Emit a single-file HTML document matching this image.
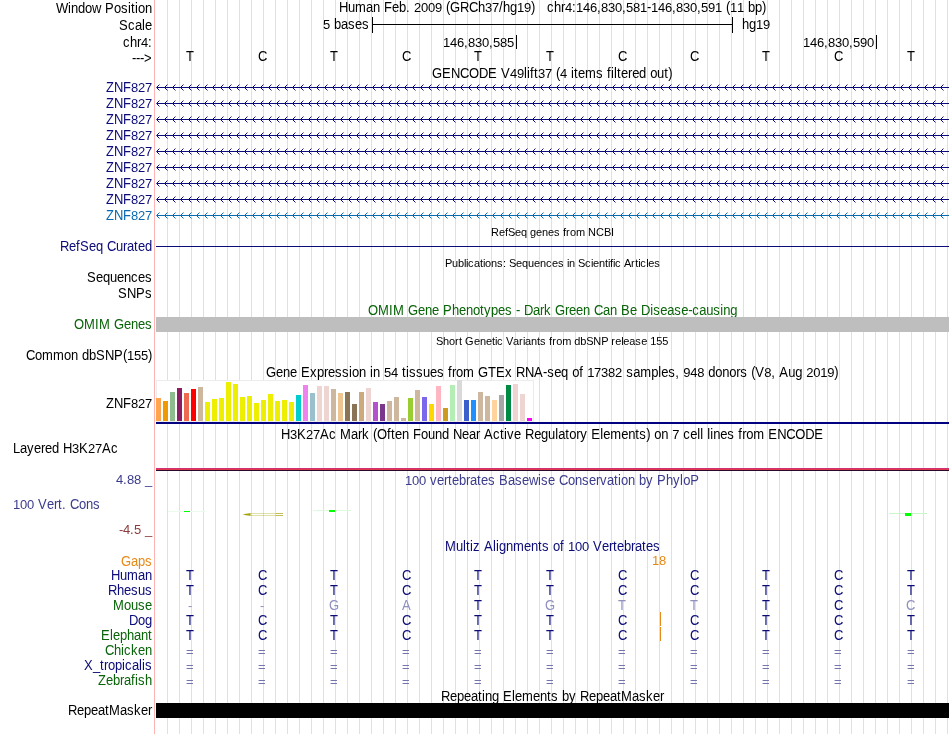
<!DOCTYPE html>
<html><head><meta charset="utf-8"><title>UCSC Genome Browser</title>
<style>
html,body{margin:0;padding:0;background:#fff;}
body{width:950px;height:734px;position:relative;overflow:hidden;font-family:"Liberation Sans",sans-serif;}
svg{position:absolute;left:0;top:0;}
#tx{position:absolute;left:0;top:0;width:950px;height:734px;will-change:transform;}
.d{display:inline-block;transform:scaleY(.945);transform-origin:0 12px;}
.t{position:absolute;white-space:pre;font-kerning:none;font-family:"Liberation Sans",sans-serif;}
</style></head><body>
<svg width="950" height="734" viewBox="0 0 950 734" shape-rendering="crispEdges">
<rect x="167" y="0" width="1" height="734" fill="#dcdcff"/>
<rect x="179" y="0" width="1" height="734" fill="#dcdcff"/>
<rect x="191" y="0" width="1" height="734" fill="#dcdcff"/>
<rect x="203" y="0" width="1" height="734" fill="#dcdcff"/>
<rect x="215" y="0" width="1" height="734" fill="#dcdcff"/>
<rect x="227" y="0" width="1" height="734" fill="#dcdcff"/>
<rect x="239" y="0" width="1" height="734" fill="#dcdcff"/>
<rect x="251" y="0" width="1" height="734" fill="#dcdcff"/>
<rect x="263" y="0" width="1" height="734" fill="#dcdcff"/>
<rect x="275" y="0" width="1" height="734" fill="#dcdcff"/>
<rect x="287" y="0" width="1" height="734" fill="#dcdcff"/>
<rect x="299" y="0" width="1" height="734" fill="#dcdcff"/>
<rect x="311" y="0" width="1" height="734" fill="#dcdcff"/>
<rect x="323" y="0" width="1" height="734" fill="#dcdcff"/>
<rect x="335" y="0" width="1" height="734" fill="#dcdcff"/>
<rect x="347" y="0" width="1" height="734" fill="#dcdcff"/>
<rect x="359" y="0" width="1" height="734" fill="#dcdcff"/>
<rect x="371" y="0" width="1" height="734" fill="#dcdcff"/>
<rect x="383" y="0" width="1" height="734" fill="#dcdcff"/>
<rect x="395" y="0" width="1" height="734" fill="#dcdcff"/>
<rect x="407" y="0" width="1" height="734" fill="#dcdcff"/>
<rect x="419" y="0" width="1" height="734" fill="#dcdcff"/>
<rect x="431" y="0" width="1" height="734" fill="#dcdcff"/>
<rect x="443" y="0" width="1" height="734" fill="#dcdcff"/>
<rect x="455" y="0" width="1" height="734" fill="#dcdcff"/>
<rect x="467" y="0" width="1" height="734" fill="#dcdcff"/>
<rect x="479" y="0" width="1" height="734" fill="#dcdcff"/>
<rect x="491" y="0" width="1" height="734" fill="#dcdcff"/>
<rect x="503" y="0" width="1" height="734" fill="#dcdcff"/>
<rect x="515" y="0" width="1" height="734" fill="#dcdcff"/>
<rect x="527" y="0" width="1" height="734" fill="#dcdcff"/>
<rect x="539" y="0" width="1" height="734" fill="#dcdcff"/>
<rect x="551" y="0" width="1" height="734" fill="#dcdcff"/>
<rect x="563" y="0" width="1" height="734" fill="#dcdcff"/>
<rect x="575" y="0" width="1" height="734" fill="#dcdcff"/>
<rect x="587" y="0" width="1" height="734" fill="#dcdcff"/>
<rect x="599" y="0" width="1" height="734" fill="#dcdcff"/>
<rect x="611" y="0" width="1" height="734" fill="#dcdcff"/>
<rect x="623" y="0" width="1" height="734" fill="#dcdcff"/>
<rect x="635" y="0" width="1" height="734" fill="#dcdcff"/>
<rect x="647" y="0" width="1" height="734" fill="#dcdcff"/>
<rect x="659" y="0" width="1" height="734" fill="#dcdcff"/>
<rect x="671" y="0" width="1" height="734" fill="#dcdcff"/>
<rect x="683" y="0" width="1" height="734" fill="#dcdcff"/>
<rect x="695" y="0" width="1" height="734" fill="#dcdcff"/>
<rect x="707" y="0" width="1" height="734" fill="#dcdcff"/>
<rect x="719" y="0" width="1" height="734" fill="#dcdcff"/>
<rect x="731" y="0" width="1" height="734" fill="#dcdcff"/>
<rect x="743" y="0" width="1" height="734" fill="#dcdcff"/>
<rect x="755" y="0" width="1" height="734" fill="#dcdcff"/>
<rect x="767" y="0" width="1" height="734" fill="#dcdcff"/>
<rect x="779" y="0" width="1" height="734" fill="#dcdcff"/>
<rect x="791" y="0" width="1" height="734" fill="#dcdcff"/>
<rect x="803" y="0" width="1" height="734" fill="#dcdcff"/>
<rect x="815" y="0" width="1" height="734" fill="#dcdcff"/>
<rect x="827" y="0" width="1" height="734" fill="#dcdcff"/>
<rect x="839" y="0" width="1" height="734" fill="#dcdcff"/>
<rect x="851" y="0" width="1" height="734" fill="#dcdcff"/>
<rect x="863" y="0" width="1" height="734" fill="#dcdcff"/>
<rect x="875" y="0" width="1" height="734" fill="#dcdcff"/>
<rect x="887" y="0" width="1" height="734" fill="#dcdcff"/>
<rect x="899" y="0" width="1" height="734" fill="#dcdcff"/>
<rect x="911" y="0" width="1" height="734" fill="#dcdcff"/>
<rect x="923" y="0" width="1" height="734" fill="#dcdcff"/>
<rect x="935" y="0" width="1" height="734" fill="#dcdcff"/>
<rect x="947" y="0" width="1" height="734" fill="#dcdcff"/>
<rect x="154" y="0" width="1" height="734" fill="#ffb4b4"/>
</svg>
<div id="tx">
<div class="t" style="left:56px;top:1px;font-size:13px;line-height:16px;color:#000;transform:scaleY(1.06);transform-origin:0 12px;"><span style="letter-spacing:-0.27px">W</span><span style="letter-spacing:0.112px">i</span><span style="letter-spacing:-0.23px">ndo</span><span style="letter-spacing:-0.388px">w</span><span style="letter-spacing:0.388px"> </span><span style="letter-spacing:0.329px">P</span><span style="letter-spacing:-0.23px">o</span><span style="letter-spacing:0.5px">s</span><span style="letter-spacing:0.112px">i</span><span style="letter-spacing:0.388px">t</span><span style="letter-spacing:0.112px">i</span><span style="letter-spacing:-0.23px">on</span></div>
<div class="t" style="left:119px;top:18px;font-size:13px;line-height:16px;color:#000;transform:scaleY(1.06);transform-origin:0 12px;"><span style="letter-spacing:0.329px">S</span><span style="letter-spacing:0.5px">c</span><span style="letter-spacing:-0.23px">a</span><span style="letter-spacing:0.112px">l</span><span style="letter-spacing:-0.23px">e</span></div>
<div class="t" style="left:123px;top:35px;font-size:13px;line-height:16px;color:#000;transform:scaleY(1.06);transform-origin:0 12px;"><span style="letter-spacing:0.5px">c</span><span style="letter-spacing:-0.23px">h</span><span style="letter-spacing:-0.329px">r</span><span class="d"><span style="letter-spacing:-0.23px">4</span></span><span style="letter-spacing:0.388px">:</span></div>
<div class="t" style="left:132px;top:51px;font-size:13px;line-height:16px;color:#000;transform:scaleY(1.06);transform-origin:0 12px;"><span style="letter-spacing:-0.329px">---</span><span style="letter-spacing:0.408px">&gt;</span></div>
<div class="t" style="left:339px;top:0px;font-size:13px;line-height:16px;color:#000;transform:scaleY(1.06);transform-origin:0 12px;"><span style="letter-spacing:-0.388px">H</span><span style="letter-spacing:-0.23px">u</span><span style="letter-spacing:0.171px">m</span><span style="letter-spacing:-0.23px">an</span><span style="letter-spacing:0.388px"> </span><span style="letter-spacing:0.059px">F</span><span style="letter-spacing:-0.23px">eb</span><span style="letter-spacing:0.388px">. </span><span class="d"><span style="letter-spacing:-0.23px">2009</span></span><span style="letter-spacing:0.388px"> </span><span style="letter-spacing:-0.329px">(</span><span style="letter-spacing:-0.112px">G</span><span style="letter-spacing:-0.388px">RC</span><span style="letter-spacing:-0.23px">h</span><span class="d"><span style="letter-spacing:-0.23px">37</span></span><span style="letter-spacing:0.388px">/</span><span style="letter-spacing:-0.23px">hg</span><span class="d"><span style="letter-spacing:-0.23px">19</span></span><span style="letter-spacing:-0.329px">)</span></div>
<div class="t" style="left:547px;top:0px;font-size:13px;line-height:16px;color:#000;transform:scaleY(1.06);transform-origin:0 12px;"><span style="letter-spacing:0.5px">c</span><span style="letter-spacing:-0.23px">h</span><span style="letter-spacing:-0.329px">r</span><span class="d"><span style="letter-spacing:-0.23px">4</span></span><span style="letter-spacing:0.388px">:</span><span class="d"><span style="letter-spacing:-0.23px">146</span></span><span style="letter-spacing:0.388px">,</span><span class="d"><span style="letter-spacing:-0.23px">830</span></span><span style="letter-spacing:0.388px">,</span><span class="d"><span style="letter-spacing:-0.23px">581</span></span><span style="letter-spacing:-0.329px">-</span><span class="d"><span style="letter-spacing:-0.23px">146</span></span><span style="letter-spacing:0.388px">,</span><span class="d"><span style="letter-spacing:-0.23px">830</span></span><span style="letter-spacing:0.388px">,</span><span class="d"><span style="letter-spacing:-0.23px">591</span></span><span style="letter-spacing:0.388px"> </span><span style="letter-spacing:-0.329px">(</span><span class="d"><span style="letter-spacing:-0.23px">11</span></span><span style="letter-spacing:0.388px"> </span><span style="letter-spacing:-0.23px">bp</span><span style="letter-spacing:-0.329px">)</span></div>
<div class="t" style="left:323px;top:17px;font-size:13px;line-height:16px;color:#000;transform:scaleY(1.06);transform-origin:0 12px;"><span class="d"><span style="letter-spacing:-0.23px">5</span></span><span style="letter-spacing:0.388px"> </span><span style="letter-spacing:-0.23px">ba</span><span style="letter-spacing:0.5px">s</span><span style="letter-spacing:-0.23px">e</span><span style="letter-spacing:0.5px">s</span></div>
<div class="t" style="left:742px;top:17px;font-size:13px;line-height:16px;color:#000;transform:scaleY(1.06);transform-origin:0 12px;"><span style="letter-spacing:-0.23px">hg</span><span class="d"><span style="letter-spacing:-0.23px">19</span></span></div>
<div class="t" style="left:443px;top:35px;font-size:13px;line-height:16px;color:#000;transform:scaleY(1.0);transform-origin:0 12px;"><span style="letter-spacing:-0.23px">146</span><span style="letter-spacing:0.388px">,</span><span style="letter-spacing:-0.23px">830</span><span style="letter-spacing:0.388px">,</span><span style="letter-spacing:-0.23px">585</span></div>
<div class="t" style="left:803px;top:35px;font-size:13px;line-height:16px;color:#000;transform:scaleY(1.0);transform-origin:0 12px;"><span style="letter-spacing:-0.23px">146</span><span style="letter-spacing:0.388px">,</span><span style="letter-spacing:-0.23px">830</span><span style="letter-spacing:0.388px">,</span><span style="letter-spacing:-0.23px">590</span></div>
<div class="t" style="left:186px;top:49px;font-size:13px;line-height:16px;color:#000;transform:scaleY(1.06);transform-origin:0 12px;"><span style="letter-spacing:0.059px">T</span></div>
<div class="t" style="left:258px;top:49px;font-size:13px;line-height:16px;color:#000;transform:scaleY(1.06);transform-origin:0 12px;"><span style="letter-spacing:-0.388px">C</span></div>
<div class="t" style="left:330px;top:49px;font-size:13px;line-height:16px;color:#000;transform:scaleY(1.06);transform-origin:0 12px;"><span style="letter-spacing:0.059px">T</span></div>
<div class="t" style="left:402px;top:49px;font-size:13px;line-height:16px;color:#000;transform:scaleY(1.06);transform-origin:0 12px;"><span style="letter-spacing:-0.388px">C</span></div>
<div class="t" style="left:474px;top:49px;font-size:13px;line-height:16px;color:#000;transform:scaleY(1.06);transform-origin:0 12px;"><span style="letter-spacing:0.059px">T</span></div>
<div class="t" style="left:546px;top:49px;font-size:13px;line-height:16px;color:#000;transform:scaleY(1.06);transform-origin:0 12px;"><span style="letter-spacing:0.059px">T</span></div>
<div class="t" style="left:618px;top:49px;font-size:13px;line-height:16px;color:#000;transform:scaleY(1.06);transform-origin:0 12px;"><span style="letter-spacing:-0.388px">C</span></div>
<div class="t" style="left:690px;top:49px;font-size:13px;line-height:16px;color:#000;transform:scaleY(1.06);transform-origin:0 12px;"><span style="letter-spacing:-0.388px">C</span></div>
<div class="t" style="left:762px;top:49px;font-size:13px;line-height:16px;color:#000;transform:scaleY(1.06);transform-origin:0 12px;"><span style="letter-spacing:0.059px">T</span></div>
<div class="t" style="left:834px;top:49px;font-size:13px;line-height:16px;color:#000;transform:scaleY(1.06);transform-origin:0 12px;"><span style="letter-spacing:-0.388px">C</span></div>
<div class="t" style="left:907px;top:49px;font-size:13px;line-height:16px;color:#000;transform:scaleY(1.06);transform-origin:0 12px;"><span style="letter-spacing:0.059px">T</span></div>
<div class="t" style="left:432px;top:66px;font-size:13px;line-height:16px;color:#000;transform:scaleY(1.06);transform-origin:0 12px;"><span style="letter-spacing:-0.112px">G</span><span style="letter-spacing:0.329px">E</span><span style="letter-spacing:-0.388px">NC</span><span style="letter-spacing:-0.112px">O</span><span style="letter-spacing:-0.388px">D</span><span style="letter-spacing:0.329px">E</span><span style="letter-spacing:0.388px"> </span><span style="letter-spacing:0.329px">V</span><span class="d"><span style="letter-spacing:-0.23px">49</span></span><span style="letter-spacing:0.112px">li</span><span style="letter-spacing:0.388px">ft</span><span class="d"><span style="letter-spacing:-0.23px">37</span></span><span style="letter-spacing:0.388px"> </span><span style="letter-spacing:-0.329px">(</span><span class="d"><span style="letter-spacing:-0.23px">4</span></span><span style="letter-spacing:0.388px"> </span><span style="letter-spacing:0.112px">i</span><span style="letter-spacing:0.388px">t</span><span style="letter-spacing:-0.23px">e</span><span style="letter-spacing:0.171px">m</span><span style="letter-spacing:0.5px">s</span><span style="letter-spacing:0.388px"> f</span><span style="letter-spacing:0.112px">il</span><span style="letter-spacing:0.388px">t</span><span style="letter-spacing:-0.23px">e</span><span style="letter-spacing:-0.329px">r</span><span style="letter-spacing:-0.23px">ed</span><span style="letter-spacing:0.388px"> </span><span style="letter-spacing:-0.23px">ou</span><span style="letter-spacing:0.388px">t</span><span style="letter-spacing:-0.329px">)</span></div>
<div class="t" style="left:106px;top:80px;font-size:13px;line-height:16px;color:#0c0c78;transform:scaleY(1.06);transform-origin:0 12px;"><span style="letter-spacing:0.059px">Z</span><span style="letter-spacing:-0.388px">N</span><span style="letter-spacing:0.059px">F</span><span class="d"><span style="letter-spacing:-0.23px">827</span></span></div>
<div class="t" style="left:106px;top:96px;font-size:13px;line-height:16px;color:#0c0c78;transform:scaleY(1.06);transform-origin:0 12px;"><span style="letter-spacing:0.059px">Z</span><span style="letter-spacing:-0.388px">N</span><span style="letter-spacing:0.059px">F</span><span class="d"><span style="letter-spacing:-0.23px">827</span></span></div>
<div class="t" style="left:106px;top:112px;font-size:13px;line-height:16px;color:#0c0c78;transform:scaleY(1.06);transform-origin:0 12px;"><span style="letter-spacing:0.059px">Z</span><span style="letter-spacing:-0.388px">N</span><span style="letter-spacing:0.059px">F</span><span class="d"><span style="letter-spacing:-0.23px">827</span></span></div>
<div class="t" style="left:106px;top:128px;font-size:13px;line-height:16px;color:#0c0c78;transform:scaleY(1.06);transform-origin:0 12px;"><span style="letter-spacing:0.059px">Z</span><span style="letter-spacing:-0.388px">N</span><span style="letter-spacing:0.059px">F</span><span class="d"><span style="letter-spacing:-0.23px">827</span></span></div>
<div class="t" style="left:106px;top:144px;font-size:13px;line-height:16px;color:#0c0c78;transform:scaleY(1.06);transform-origin:0 12px;"><span style="letter-spacing:0.059px">Z</span><span style="letter-spacing:-0.388px">N</span><span style="letter-spacing:0.059px">F</span><span class="d"><span style="letter-spacing:-0.23px">827</span></span></div>
<div class="t" style="left:106px;top:160px;font-size:13px;line-height:16px;color:#0c0c78;transform:scaleY(1.06);transform-origin:0 12px;"><span style="letter-spacing:0.059px">Z</span><span style="letter-spacing:-0.388px">N</span><span style="letter-spacing:0.059px">F</span><span class="d"><span style="letter-spacing:-0.23px">827</span></span></div>
<div class="t" style="left:106px;top:176px;font-size:13px;line-height:16px;color:#0c0c78;transform:scaleY(1.06);transform-origin:0 12px;"><span style="letter-spacing:0.059px">Z</span><span style="letter-spacing:-0.388px">N</span><span style="letter-spacing:0.059px">F</span><span class="d"><span style="letter-spacing:-0.23px">827</span></span></div>
<div class="t" style="left:106px;top:192px;font-size:13px;line-height:16px;color:#0c0c78;transform:scaleY(1.06);transform-origin:0 12px;"><span style="letter-spacing:0.059px">Z</span><span style="letter-spacing:-0.388px">N</span><span style="letter-spacing:0.059px">F</span><span class="d"><span style="letter-spacing:-0.23px">827</span></span></div>
<div class="t" style="left:106px;top:208px;font-size:13px;line-height:16px;color:#0a69af;transform:scaleY(1.06);transform-origin:0 12px;"><span style="letter-spacing:0.059px">Z</span><span style="letter-spacing:-0.388px">N</span><span style="letter-spacing:0.059px">F</span><span class="d"><span style="letter-spacing:-0.23px">827</span></span></div>
<div class="t" style="left:491px;top:225px;font-size:11px;line-height:14px;color:#000;transform:scaleY(1.06);transform-origin:0 11px;"><span style="letter-spacing:0.056px">R</span><span style="letter-spacing:-0.118px">e</span><span style="letter-spacing:-0.056px">f</span><span style="letter-spacing:-0.337px">S</span><span style="letter-spacing:-0.118px">eq</span><span style="letter-spacing:-0.056px"> </span><span style="letter-spacing:-0.118px">gene</span><span style="letter-spacing:0.5px">s</span><span style="letter-spacing:-0.056px"> f</span><span style="letter-spacing:0.337px">r</span><span style="letter-spacing:-0.118px">o</span><span style="letter-spacing:-0.163px">m</span><span style="letter-spacing:-0.056px"> </span><span style="letter-spacing:0.056px">NC</span><span style="letter-spacing:-0.337px">B</span><span style="letter-spacing:-0.056px">I</span></div>
<div class="t" style="left:60px;top:239px;font-size:13px;line-height:16px;color:#0c0c78;transform:scaleY(1.06);transform-origin:0 12px;"><span style="letter-spacing:-0.388px">R</span><span style="letter-spacing:-0.23px">e</span><span style="letter-spacing:0.388px">f</span><span style="letter-spacing:0.329px">S</span><span style="letter-spacing:-0.23px">eq</span><span style="letter-spacing:0.388px"> </span><span style="letter-spacing:-0.388px">C</span><span style="letter-spacing:-0.23px">u</span><span style="letter-spacing:-0.329px">r</span><span style="letter-spacing:-0.23px">a</span><span style="letter-spacing:0.388px">t</span><span style="letter-spacing:-0.23px">ed</span></div>
<div class="t" style="left:445px;top:256px;font-size:11px;line-height:14px;color:#000;transform:scaleY(1.06);transform-origin:0 11px;"><span style="letter-spacing:-0.337px">P</span><span style="letter-spacing:-0.118px">ub</span><span style="letter-spacing:-0.444px">li</span><span style="letter-spacing:0.5px">c</span><span style="letter-spacing:-0.118px">a</span><span style="letter-spacing:-0.056px">t</span><span style="letter-spacing:-0.444px">i</span><span style="letter-spacing:-0.118px">on</span><span style="letter-spacing:0.5px">s</span><span style="letter-spacing:-0.056px">: </span><span style="letter-spacing:-0.337px">S</span><span style="letter-spacing:-0.118px">equen</span><span style="letter-spacing:0.5px">c</span><span style="letter-spacing:-0.118px">e</span><span style="letter-spacing:0.5px">s</span><span style="letter-spacing:-0.056px"> </span><span style="letter-spacing:-0.444px">i</span><span style="letter-spacing:-0.118px">n</span><span style="letter-spacing:-0.056px"> </span><span style="letter-spacing:-0.337px">S</span><span style="letter-spacing:0.5px">c</span><span style="letter-spacing:-0.444px">i</span><span style="letter-spacing:-0.118px">en</span><span style="letter-spacing:-0.056px">t</span><span style="letter-spacing:-0.444px">i</span><span style="letter-spacing:-0.056px">f</span><span style="letter-spacing:-0.444px">i</span><span style="letter-spacing:0.5px">c</span><span style="letter-spacing:-0.056px"> </span><span style="letter-spacing:-0.337px">A</span><span style="letter-spacing:0.337px">r</span><span style="letter-spacing:-0.056px">t</span><span style="letter-spacing:-0.444px">i</span><span style="letter-spacing:0.5px">c</span><span style="letter-spacing:-0.444px">l</span><span style="letter-spacing:-0.118px">e</span><span style="letter-spacing:0.5px">s</span></div>
<div class="t" style="left:87px;top:270px;font-size:13px;line-height:16px;color:#000;transform:scaleY(1.06);transform-origin:0 12px;"><span style="letter-spacing:0.329px">S</span><span style="letter-spacing:-0.23px">equen</span><span style="letter-spacing:0.5px">c</span><span style="letter-spacing:-0.23px">e</span><span style="letter-spacing:0.5px">s</span></div>
<div class="t" style="left:118px;top:286px;font-size:13px;line-height:16px;color:#000;transform:scaleY(1.06);transform-origin:0 12px;"><span style="letter-spacing:0.329px">S</span><span style="letter-spacing:-0.388px">N</span><span style="letter-spacing:0.329px">P</span><span style="letter-spacing:0.5px">s</span></div>
<div class="t" style="left:368px;top:303px;font-size:13px;line-height:16px;color:#0a640a;transform:scaleY(1.06);transform-origin:0 12px;"><span style="letter-spacing:-0.112px">O</span><span style="letter-spacing:0.171px">M</span><span style="letter-spacing:0.388px">I</span><span style="letter-spacing:0.171px">M</span><span style="letter-spacing:0.388px"> </span><span style="letter-spacing:-0.112px">G</span><span style="letter-spacing:-0.23px">ene</span><span style="letter-spacing:0.388px"> </span><span style="letter-spacing:0.329px">P</span><span style="letter-spacing:-0.23px">heno</span><span style="letter-spacing:0.388px">t</span><span style="letter-spacing:0.5px">y</span><span style="letter-spacing:-0.23px">pe</span><span style="letter-spacing:0.5px">s</span><span style="letter-spacing:0.388px"> </span><span style="letter-spacing:-0.329px">-</span><span style="letter-spacing:0.388px"> </span><span style="letter-spacing:-0.388px">D</span><span style="letter-spacing:-0.23px">a</span><span style="letter-spacing:-0.329px">r</span><span style="letter-spacing:0.5px">k</span><span style="letter-spacing:0.388px"> </span><span style="letter-spacing:-0.112px">G</span><span style="letter-spacing:-0.329px">r</span><span style="letter-spacing:-0.23px">een</span><span style="letter-spacing:0.388px"> </span><span style="letter-spacing:-0.388px">C</span><span style="letter-spacing:-0.23px">an</span><span style="letter-spacing:0.388px"> </span><span style="letter-spacing:0.329px">B</span><span style="letter-spacing:-0.23px">e</span><span style="letter-spacing:0.388px"> </span><span style="letter-spacing:-0.388px">D</span><span style="letter-spacing:0.112px">i</span><span style="letter-spacing:0.5px">s</span><span style="letter-spacing:-0.23px">ea</span><span style="letter-spacing:0.5px">s</span><span style="letter-spacing:-0.23px">e</span><span style="letter-spacing:-0.329px">-</span><span style="letter-spacing:0.5px">c</span><span style="letter-spacing:-0.23px">au</span><span style="letter-spacing:0.5px">s</span><span style="letter-spacing:0.112px">i</span><span style="letter-spacing:-0.23px">ng</span></div>
<div class="t" style="left:74px;top:317px;font-size:13px;line-height:16px;color:#0a640a;transform:scaleY(1.06);transform-origin:0 12px;"><span style="letter-spacing:-0.112px">O</span><span style="letter-spacing:0.171px">M</span><span style="letter-spacing:0.388px">I</span><span style="letter-spacing:0.171px">M</span><span style="letter-spacing:0.388px"> </span><span style="letter-spacing:-0.112px">G</span><span style="letter-spacing:-0.23px">ene</span><span style="letter-spacing:0.5px">s</span></div>
<div class="t" style="left:436px;top:334px;font-size:11px;line-height:14px;color:#000;transform:scaleY(1.06);transform-origin:0 11px;"><span style="letter-spacing:-0.337px">S</span><span style="letter-spacing:-0.118px">ho</span><span style="letter-spacing:0.337px">r</span><span style="letter-spacing:-0.056px">t </span><span style="letter-spacing:0.444px">G</span><span style="letter-spacing:-0.118px">ene</span><span style="letter-spacing:-0.056px">t</span><span style="letter-spacing:-0.444px">i</span><span style="letter-spacing:0.5px">c</span><span style="letter-spacing:-0.056px"> </span><span style="letter-spacing:-0.337px">V</span><span style="letter-spacing:-0.118px">a</span><span style="letter-spacing:0.337px">r</span><span style="letter-spacing:-0.444px">i</span><span style="letter-spacing:-0.118px">an</span><span style="letter-spacing:-0.056px">t</span><span style="letter-spacing:0.5px">s</span><span style="letter-spacing:-0.056px"> f</span><span style="letter-spacing:0.337px">r</span><span style="letter-spacing:-0.118px">o</span><span style="letter-spacing:-0.163px">m</span><span style="letter-spacing:-0.056px"> </span><span style="letter-spacing:-0.118px">db</span><span style="letter-spacing:-0.337px">S</span><span style="letter-spacing:0.056px">N</span><span style="letter-spacing:-0.337px">P</span><span style="letter-spacing:-0.056px"> </span><span style="letter-spacing:0.337px">r</span><span style="letter-spacing:-0.118px">e</span><span style="letter-spacing:-0.444px">l</span><span style="letter-spacing:-0.118px">ea</span><span style="letter-spacing:0.5px">s</span><span style="letter-spacing:-0.118px">e</span><span style="letter-spacing:-0.056px"> </span><span class="d"><span style="letter-spacing:-0.118px">155</span></span></div>
<div class="t" style="left:26px;top:348px;font-size:13px;line-height:16px;color:#000;transform:scaleY(1.06);transform-origin:0 12px;"><span style="letter-spacing:-0.388px">C</span><span style="letter-spacing:-0.23px">o</span><span style="letter-spacing:0.171px">mm</span><span style="letter-spacing:-0.23px">on</span><span style="letter-spacing:0.388px"> </span><span style="letter-spacing:-0.23px">db</span><span style="letter-spacing:0.329px">S</span><span style="letter-spacing:-0.388px">N</span><span style="letter-spacing:0.329px">P</span><span style="letter-spacing:-0.329px">(</span><span class="d"><span style="letter-spacing:-0.23px">155</span></span><span style="letter-spacing:-0.329px">)</span></div>
<div class="t" style="left:266px;top:365px;font-size:13px;line-height:16px;color:#000;transform:scaleY(1.06);transform-origin:0 12px;"><span style="letter-spacing:-0.112px">G</span><span style="letter-spacing:-0.23px">ene</span><span style="letter-spacing:0.388px"> </span><span style="letter-spacing:0.329px">E</span><span style="letter-spacing:0.5px">x</span><span style="letter-spacing:-0.23px">p</span><span style="letter-spacing:-0.329px">r</span><span style="letter-spacing:-0.23px">e</span><span style="letter-spacing:0.5px">ss</span><span style="letter-spacing:0.112px">i</span><span style="letter-spacing:-0.23px">on</span><span style="letter-spacing:0.388px"> </span><span style="letter-spacing:0.112px">i</span><span style="letter-spacing:-0.23px">n</span><span style="letter-spacing:0.388px"> </span><span class="d"><span style="letter-spacing:-0.23px">54</span></span><span style="letter-spacing:0.388px"> t</span><span style="letter-spacing:0.112px">i</span><span style="letter-spacing:0.5px">ss</span><span style="letter-spacing:-0.23px">ue</span><span style="letter-spacing:0.5px">s</span><span style="letter-spacing:0.388px"> f</span><span style="letter-spacing:-0.329px">r</span><span style="letter-spacing:-0.23px">o</span><span style="letter-spacing:0.171px">m</span><span style="letter-spacing:0.388px"> </span><span style="letter-spacing:-0.112px">G</span><span style="letter-spacing:0.059px">T</span><span style="letter-spacing:0.329px">E</span><span style="letter-spacing:0.5px">x</span><span style="letter-spacing:0.388px"> </span><span style="letter-spacing:-0.388px">RN</span><span style="letter-spacing:0.329px">A</span><span style="letter-spacing:-0.329px">-</span><span style="letter-spacing:0.5px">s</span><span style="letter-spacing:-0.23px">eq</span><span style="letter-spacing:0.388px"> </span><span style="letter-spacing:-0.23px">o</span><span style="letter-spacing:0.388px">f </span><span class="d"><span style="letter-spacing:-0.23px">17382</span></span><span style="letter-spacing:0.388px"> </span><span style="letter-spacing:0.5px">s</span><span style="letter-spacing:-0.23px">a</span><span style="letter-spacing:0.171px">m</span><span style="letter-spacing:-0.23px">p</span><span style="letter-spacing:0.112px">l</span><span style="letter-spacing:-0.23px">e</span><span style="letter-spacing:0.5px">s</span><span style="letter-spacing:0.388px">, </span><span class="d"><span style="letter-spacing:-0.23px">948</span></span><span style="letter-spacing:0.388px"> </span><span style="letter-spacing:-0.23px">dono</span><span style="letter-spacing:-0.329px">r</span><span style="letter-spacing:0.5px">s</span><span style="letter-spacing:0.388px"> </span><span style="letter-spacing:-0.329px">(</span><span style="letter-spacing:0.329px">V</span><span class="d"><span style="letter-spacing:-0.23px">8</span></span><span style="letter-spacing:0.388px">, </span><span style="letter-spacing:0.329px">A</span><span style="letter-spacing:-0.23px">ug</span><span style="letter-spacing:0.388px"> </span><span class="d"><span style="letter-spacing:-0.23px">2019</span></span><span style="letter-spacing:-0.329px">)</span></div>
<div class="t" style="left:106px;top:396px;font-size:13px;line-height:16px;color:#000;transform:scaleY(1.06);transform-origin:0 12px;"><span style="letter-spacing:0.059px">Z</span><span style="letter-spacing:-0.388px">N</span><span style="letter-spacing:0.059px">F</span><span class="d"><span style="letter-spacing:-0.23px">827</span></span></div>
<div class="t" style="left:281px;top:427px;font-size:13px;line-height:16px;color:#000;transform:scaleY(1.06);transform-origin:0 12px;"><span style="letter-spacing:-0.388px">H</span><span class="d"><span style="letter-spacing:-0.23px">3</span></span><span style="letter-spacing:0.329px">K</span><span class="d"><span style="letter-spacing:-0.23px">27</span></span><span style="letter-spacing:0.329px">A</span><span style="letter-spacing:0.5px">c</span><span style="letter-spacing:0.388px"> </span><span style="letter-spacing:0.171px">M</span><span style="letter-spacing:-0.23px">a</span><span style="letter-spacing:-0.329px">r</span><span style="letter-spacing:0.5px">k</span><span style="letter-spacing:0.388px"> </span><span style="letter-spacing:-0.329px">(</span><span style="letter-spacing:-0.112px">O</span><span style="letter-spacing:0.388px">ft</span><span style="letter-spacing:-0.23px">en</span><span style="letter-spacing:0.388px"> </span><span style="letter-spacing:0.059px">F</span><span style="letter-spacing:-0.23px">ound</span><span style="letter-spacing:0.388px"> </span><span style="letter-spacing:-0.388px">N</span><span style="letter-spacing:-0.23px">ea</span><span style="letter-spacing:-0.329px">r</span><span style="letter-spacing:0.388px"> </span><span style="letter-spacing:0.329px">A</span><span style="letter-spacing:0.5px">c</span><span style="letter-spacing:0.388px">t</span><span style="letter-spacing:0.112px">i</span><span style="letter-spacing:0.5px">v</span><span style="letter-spacing:-0.23px">e</span><span style="letter-spacing:0.388px"> </span><span style="letter-spacing:-0.388px">R</span><span style="letter-spacing:-0.23px">egu</span><span style="letter-spacing:0.112px">l</span><span style="letter-spacing:-0.23px">a</span><span style="letter-spacing:0.388px">t</span><span style="letter-spacing:-0.23px">o</span><span style="letter-spacing:-0.329px">r</span><span style="letter-spacing:0.5px">y</span><span style="letter-spacing:0.388px"> </span><span style="letter-spacing:0.329px">E</span><span style="letter-spacing:0.112px">l</span><span style="letter-spacing:-0.23px">e</span><span style="letter-spacing:0.171px">m</span><span style="letter-spacing:-0.23px">en</span><span style="letter-spacing:0.388px">t</span><span style="letter-spacing:0.5px">s</span><span style="letter-spacing:-0.329px">)</span><span style="letter-spacing:0.388px"> </span><span style="letter-spacing:-0.23px">on</span><span style="letter-spacing:0.388px"> </span><span class="d"><span style="letter-spacing:-0.23px">7</span></span><span style="letter-spacing:0.388px"> </span><span style="letter-spacing:0.5px">c</span><span style="letter-spacing:-0.23px">e</span><span style="letter-spacing:0.112px">ll</span><span style="letter-spacing:0.388px"> </span><span style="letter-spacing:0.112px">li</span><span style="letter-spacing:-0.23px">ne</span><span style="letter-spacing:0.5px">s</span><span style="letter-spacing:0.388px"> f</span><span style="letter-spacing:-0.329px">r</span><span style="letter-spacing:-0.23px">o</span><span style="letter-spacing:0.171px">m</span><span style="letter-spacing:0.388px"> </span><span style="letter-spacing:0.329px">E</span><span style="letter-spacing:-0.388px">NC</span><span style="letter-spacing:-0.112px">O</span><span style="letter-spacing:-0.388px">D</span><span style="letter-spacing:0.329px">E</span></div>
<div class="t" style="left:13px;top:441px;font-size:13px;line-height:16px;color:#000;transform:scaleY(1.06);transform-origin:0 12px;"><span style="letter-spacing:-0.23px">La</span><span style="letter-spacing:0.5px">y</span><span style="letter-spacing:-0.23px">e</span><span style="letter-spacing:-0.329px">r</span><span style="letter-spacing:-0.23px">ed</span><span style="letter-spacing:0.388px"> </span><span style="letter-spacing:-0.388px">H</span><span class="d"><span style="letter-spacing:-0.23px">3</span></span><span style="letter-spacing:0.329px">K</span><span class="d"><span style="letter-spacing:-0.23px">27</span></span><span style="letter-spacing:0.329px">A</span><span style="letter-spacing:0.5px">c</span></div>
<div class="t" style="left:405px;top:473px;font-size:13px;line-height:16px;color:#3c3c8c;transform:scaleY(1.06);transform-origin:0 12px;"><span class="d"><span style="letter-spacing:-0.23px">100</span></span><span style="letter-spacing:0.388px"> </span><span style="letter-spacing:0.5px">v</span><span style="letter-spacing:-0.23px">e</span><span style="letter-spacing:-0.329px">r</span><span style="letter-spacing:0.388px">t</span><span style="letter-spacing:-0.23px">eb</span><span style="letter-spacing:-0.329px">r</span><span style="letter-spacing:-0.23px">a</span><span style="letter-spacing:0.388px">t</span><span style="letter-spacing:-0.23px">e</span><span style="letter-spacing:0.5px">s</span><span style="letter-spacing:0.388px"> </span><span style="letter-spacing:0.329px">B</span><span style="letter-spacing:-0.23px">a</span><span style="letter-spacing:0.5px">s</span><span style="letter-spacing:-0.23px">e</span><span style="letter-spacing:-0.388px">w</span><span style="letter-spacing:0.112px">i</span><span style="letter-spacing:0.5px">s</span><span style="letter-spacing:-0.23px">e</span><span style="letter-spacing:0.388px"> </span><span style="letter-spacing:-0.388px">C</span><span style="letter-spacing:-0.23px">on</span><span style="letter-spacing:0.5px">s</span><span style="letter-spacing:-0.23px">e</span><span style="letter-spacing:-0.329px">r</span><span style="letter-spacing:0.5px">v</span><span style="letter-spacing:-0.23px">a</span><span style="letter-spacing:0.388px">t</span><span style="letter-spacing:0.112px">i</span><span style="letter-spacing:-0.23px">on</span><span style="letter-spacing:0.388px"> </span><span style="letter-spacing:-0.23px">b</span><span style="letter-spacing:0.5px">y</span><span style="letter-spacing:0.388px"> </span><span style="letter-spacing:0.329px">P</span><span style="letter-spacing:-0.23px">h</span><span style="letter-spacing:0.5px">y</span><span style="letter-spacing:0.112px">l</span><span style="letter-spacing:-0.23px">o</span><span style="letter-spacing:0.329px">P</span></div>
<div class="t" style="left:116px;top:472px;font-size:13px;line-height:16px;color:#3c3c8c;transform:scaleY(1.0);transform-origin:0 12px;"><span style="letter-spacing:-0.23px">4</span><span style="letter-spacing:0.388px">.</span><span style="letter-spacing:-0.23px">88</span><span style="letter-spacing:0.388px"> </span><span style="letter-spacing:-0.23px">_</span></div>
<div class="t" style="left:13px;top:497px;font-size:13px;line-height:16px;color:#3c3c8c;transform:scaleY(1.06);transform-origin:0 12px;"><span class="d"><span style="letter-spacing:-0.23px">100</span></span><span style="letter-spacing:0.388px"> </span><span style="letter-spacing:0.329px">V</span><span style="letter-spacing:-0.23px">e</span><span style="letter-spacing:-0.329px">r</span><span style="letter-spacing:0.388px">t. </span><span style="letter-spacing:-0.388px">C</span><span style="letter-spacing:-0.23px">on</span><span style="letter-spacing:0.5px">s</span></div>
<div class="t" style="left:119px;top:522px;font-size:13px;line-height:16px;color:#8c3c3c;transform:scaleY(1.0);transform-origin:0 12px;"><span style="letter-spacing:-0.329px">-</span><span style="letter-spacing:-0.23px">4</span><span style="letter-spacing:0.388px">.</span><span style="letter-spacing:-0.23px">5</span><span style="letter-spacing:0.388px"> </span><span style="letter-spacing:-0.23px">_</span></div>
<div class="t" style="left:445px;top:539px;font-size:13px;line-height:16px;color:#0c0c78;transform:scaleY(1.06);transform-origin:0 12px;"><span style="letter-spacing:0.171px">M</span><span style="letter-spacing:-0.23px">u</span><span style="letter-spacing:0.112px">l</span><span style="letter-spacing:0.388px">t</span><span style="letter-spacing:0.112px">i</span><span style="letter-spacing:0.5px">z</span><span style="letter-spacing:0.388px"> </span><span style="letter-spacing:0.329px">A</span><span style="letter-spacing:0.112px">li</span><span style="letter-spacing:-0.23px">gn</span><span style="letter-spacing:0.171px">m</span><span style="letter-spacing:-0.23px">en</span><span style="letter-spacing:0.388px">t</span><span style="letter-spacing:0.5px">s</span><span style="letter-spacing:0.388px"> </span><span style="letter-spacing:-0.23px">o</span><span style="letter-spacing:0.388px">f </span><span class="d"><span style="letter-spacing:-0.23px">100</span></span><span style="letter-spacing:0.388px"> </span><span style="letter-spacing:0.329px">V</span><span style="letter-spacing:-0.23px">e</span><span style="letter-spacing:-0.329px">r</span><span style="letter-spacing:0.388px">t</span><span style="letter-spacing:-0.23px">eb</span><span style="letter-spacing:-0.329px">r</span><span style="letter-spacing:-0.23px">a</span><span style="letter-spacing:0.388px">t</span><span style="letter-spacing:-0.23px">e</span><span style="letter-spacing:0.5px">s</span></div>
<div class="t" style="left:121px;top:554px;font-size:13px;line-height:16px;color:#e68a17;transform:scaleY(1.06);transform-origin:0 12px;"><span style="letter-spacing:-0.112px">G</span><span style="letter-spacing:-0.23px">ap</span><span style="letter-spacing:0.5px">s</span></div>
<div class="t" style="left:652px;top:553px;font-size:13px;line-height:16px;color:#e68a17;transform:scaleY(1.0);transform-origin:0 12px;"><span style="letter-spacing:-0.23px">18</span></div>
<div class="t" style="left:111px;top:568px;font-size:13px;line-height:16px;color:#0c0c78;transform:scaleY(1.06);transform-origin:0 12px;"><span style="letter-spacing:-0.388px">H</span><span style="letter-spacing:-0.23px">u</span><span style="letter-spacing:0.171px">m</span><span style="letter-spacing:-0.23px">an</span></div>
<div class="t" style="left:186px;top:568px;font-size:13px;line-height:16px;color:#0c0c78;transform:scaleY(1.06);transform-origin:0 12px;"><span style="letter-spacing:0.059px">T</span></div>
<div class="t" style="left:258px;top:568px;font-size:13px;line-height:16px;color:#0c0c78;transform:scaleY(1.06);transform-origin:0 12px;"><span style="letter-spacing:-0.388px">C</span></div>
<div class="t" style="left:330px;top:568px;font-size:13px;line-height:16px;color:#0c0c78;transform:scaleY(1.06);transform-origin:0 12px;"><span style="letter-spacing:0.059px">T</span></div>
<div class="t" style="left:402px;top:568px;font-size:13px;line-height:16px;color:#0c0c78;transform:scaleY(1.06);transform-origin:0 12px;"><span style="letter-spacing:-0.388px">C</span></div>
<div class="t" style="left:474px;top:568px;font-size:13px;line-height:16px;color:#0c0c78;transform:scaleY(1.06);transform-origin:0 12px;"><span style="letter-spacing:0.059px">T</span></div>
<div class="t" style="left:546px;top:568px;font-size:13px;line-height:16px;color:#0c0c78;transform:scaleY(1.06);transform-origin:0 12px;"><span style="letter-spacing:0.059px">T</span></div>
<div class="t" style="left:618px;top:568px;font-size:13px;line-height:16px;color:#0c0c78;transform:scaleY(1.06);transform-origin:0 12px;"><span style="letter-spacing:-0.388px">C</span></div>
<div class="t" style="left:690px;top:568px;font-size:13px;line-height:16px;color:#0c0c78;transform:scaleY(1.06);transform-origin:0 12px;"><span style="letter-spacing:-0.388px">C</span></div>
<div class="t" style="left:762px;top:568px;font-size:13px;line-height:16px;color:#0c0c78;transform:scaleY(1.06);transform-origin:0 12px;"><span style="letter-spacing:0.059px">T</span></div>
<div class="t" style="left:834px;top:568px;font-size:13px;line-height:16px;color:#0c0c78;transform:scaleY(1.06);transform-origin:0 12px;"><span style="letter-spacing:-0.388px">C</span></div>
<div class="t" style="left:907px;top:568px;font-size:13px;line-height:16px;color:#0c0c78;transform:scaleY(1.06);transform-origin:0 12px;"><span style="letter-spacing:0.059px">T</span></div>
<div class="t" style="left:108px;top:583px;font-size:13px;line-height:16px;color:#0c0c78;transform:scaleY(1.06);transform-origin:0 12px;"><span style="letter-spacing:-0.388px">R</span><span style="letter-spacing:-0.23px">he</span><span style="letter-spacing:0.5px">s</span><span style="letter-spacing:-0.23px">u</span><span style="letter-spacing:0.5px">s</span></div>
<div class="t" style="left:186px;top:583px;font-size:13px;line-height:16px;color:#0c0c78;transform:scaleY(1.06);transform-origin:0 12px;"><span style="letter-spacing:0.059px">T</span></div>
<div class="t" style="left:258px;top:583px;font-size:13px;line-height:16px;color:#0c0c78;transform:scaleY(1.06);transform-origin:0 12px;"><span style="letter-spacing:-0.388px">C</span></div>
<div class="t" style="left:330px;top:583px;font-size:13px;line-height:16px;color:#0c0c78;transform:scaleY(1.06);transform-origin:0 12px;"><span style="letter-spacing:0.059px">T</span></div>
<div class="t" style="left:402px;top:583px;font-size:13px;line-height:16px;color:#0c0c78;transform:scaleY(1.06);transform-origin:0 12px;"><span style="letter-spacing:-0.388px">C</span></div>
<div class="t" style="left:474px;top:583px;font-size:13px;line-height:16px;color:#0c0c78;transform:scaleY(1.06);transform-origin:0 12px;"><span style="letter-spacing:0.059px">T</span></div>
<div class="t" style="left:546px;top:583px;font-size:13px;line-height:16px;color:#0c0c78;transform:scaleY(1.06);transform-origin:0 12px;"><span style="letter-spacing:0.059px">T</span></div>
<div class="t" style="left:618px;top:583px;font-size:13px;line-height:16px;color:#0c0c78;transform:scaleY(1.06);transform-origin:0 12px;"><span style="letter-spacing:-0.388px">C</span></div>
<div class="t" style="left:690px;top:583px;font-size:13px;line-height:16px;color:#0c0c78;transform:scaleY(1.06);transform-origin:0 12px;"><span style="letter-spacing:-0.388px">C</span></div>
<div class="t" style="left:762px;top:583px;font-size:13px;line-height:16px;color:#0c0c78;transform:scaleY(1.06);transform-origin:0 12px;"><span style="letter-spacing:0.059px">T</span></div>
<div class="t" style="left:834px;top:583px;font-size:13px;line-height:16px;color:#0c0c78;transform:scaleY(1.06);transform-origin:0 12px;"><span style="letter-spacing:-0.388px">C</span></div>
<div class="t" style="left:907px;top:583px;font-size:13px;line-height:16px;color:#0c0c78;transform:scaleY(1.06);transform-origin:0 12px;"><span style="letter-spacing:0.059px">T</span></div>
<div class="t" style="left:113px;top:598px;font-size:13px;line-height:16px;color:#0a640a;transform:scaleY(1.06);transform-origin:0 12px;"><span style="letter-spacing:0.171px">M</span><span style="letter-spacing:-0.23px">ou</span><span style="letter-spacing:0.5px">s</span><span style="letter-spacing:-0.23px">e</span></div>
<div class="t" style="left:188px;top:598px;font-size:13px;line-height:16px;color:#9090c0;transform:scaleY(1.0);transform-origin:0 12px;"><span style="letter-spacing:-0.329px">-</span></div>
<div class="t" style="left:260px;top:598px;font-size:13px;line-height:16px;color:#9090c0;transform:scaleY(1.0);transform-origin:0 12px;"><span style="letter-spacing:-0.329px">-</span></div>
<div class="t" style="left:329px;top:598px;font-size:13px;line-height:16px;color:#9090c0;transform:scaleY(1.06);transform-origin:0 12px;"><span style="letter-spacing:-0.112px">G</span></div>
<div class="t" style="left:402px;top:598px;font-size:13px;line-height:16px;color:#9090c0;transform:scaleY(1.06);transform-origin:0 12px;"><span style="letter-spacing:0.329px">A</span></div>
<div class="t" style="left:474px;top:598px;font-size:13px;line-height:16px;color:#0c0c78;transform:scaleY(1.06);transform-origin:0 12px;"><span style="letter-spacing:0.059px">T</span></div>
<div class="t" style="left:545px;top:598px;font-size:13px;line-height:16px;color:#9090c0;transform:scaleY(1.06);transform-origin:0 12px;"><span style="letter-spacing:-0.112px">G</span></div>
<div class="t" style="left:618px;top:598px;font-size:13px;line-height:16px;color:#9090c0;transform:scaleY(1.06);transform-origin:0 12px;"><span style="letter-spacing:0.059px">T</span></div>
<div class="t" style="left:690px;top:598px;font-size:13px;line-height:16px;color:#9090c0;transform:scaleY(1.06);transform-origin:0 12px;"><span style="letter-spacing:0.059px">T</span></div>
<div class="t" style="left:762px;top:598px;font-size:13px;line-height:16px;color:#0c0c78;transform:scaleY(1.06);transform-origin:0 12px;"><span style="letter-spacing:0.059px">T</span></div>
<div class="t" style="left:834px;top:598px;font-size:13px;line-height:16px;color:#0c0c78;transform:scaleY(1.06);transform-origin:0 12px;"><span style="letter-spacing:-0.388px">C</span></div>
<div class="t" style="left:906px;top:598px;font-size:13px;line-height:16px;color:#9090c0;transform:scaleY(1.06);transform-origin:0 12px;"><span style="letter-spacing:-0.388px">C</span></div>
<div class="t" style="left:129px;top:613px;font-size:13px;line-height:16px;color:#0c0c78;transform:scaleY(1.06);transform-origin:0 12px;"><span style="letter-spacing:-0.388px">D</span><span style="letter-spacing:-0.23px">og</span></div>
<div class="t" style="left:186px;top:613px;font-size:13px;line-height:16px;color:#0c0c78;transform:scaleY(1.06);transform-origin:0 12px;"><span style="letter-spacing:0.059px">T</span></div>
<div class="t" style="left:258px;top:613px;font-size:13px;line-height:16px;color:#0c0c78;transform:scaleY(1.06);transform-origin:0 12px;"><span style="letter-spacing:-0.388px">C</span></div>
<div class="t" style="left:330px;top:613px;font-size:13px;line-height:16px;color:#0c0c78;transform:scaleY(1.06);transform-origin:0 12px;"><span style="letter-spacing:0.059px">T</span></div>
<div class="t" style="left:402px;top:613px;font-size:13px;line-height:16px;color:#0c0c78;transform:scaleY(1.06);transform-origin:0 12px;"><span style="letter-spacing:-0.388px">C</span></div>
<div class="t" style="left:474px;top:613px;font-size:13px;line-height:16px;color:#0c0c78;transform:scaleY(1.06);transform-origin:0 12px;"><span style="letter-spacing:0.059px">T</span></div>
<div class="t" style="left:546px;top:613px;font-size:13px;line-height:16px;color:#0c0c78;transform:scaleY(1.06);transform-origin:0 12px;"><span style="letter-spacing:0.059px">T</span></div>
<div class="t" style="left:618px;top:613px;font-size:13px;line-height:16px;color:#0c0c78;transform:scaleY(1.06);transform-origin:0 12px;"><span style="letter-spacing:-0.388px">C</span></div>
<div class="t" style="left:690px;top:613px;font-size:13px;line-height:16px;color:#0c0c78;transform:scaleY(1.06);transform-origin:0 12px;"><span style="letter-spacing:-0.388px">C</span></div>
<div class="t" style="left:762px;top:613px;font-size:13px;line-height:16px;color:#0c0c78;transform:scaleY(1.06);transform-origin:0 12px;"><span style="letter-spacing:0.059px">T</span></div>
<div class="t" style="left:834px;top:613px;font-size:13px;line-height:16px;color:#0c0c78;transform:scaleY(1.06);transform-origin:0 12px;"><span style="letter-spacing:-0.388px">C</span></div>
<div class="t" style="left:907px;top:613px;font-size:13px;line-height:16px;color:#0c0c78;transform:scaleY(1.06);transform-origin:0 12px;"><span style="letter-spacing:0.059px">T</span></div>
<div class="t" style="left:101px;top:628px;font-size:13px;line-height:16px;color:#0a640a;transform:scaleY(1.06);transform-origin:0 12px;"><span style="letter-spacing:0.329px">E</span><span style="letter-spacing:0.112px">l</span><span style="letter-spacing:-0.23px">ephan</span><span style="letter-spacing:0.388px">t</span></div>
<div class="t" style="left:186px;top:628px;font-size:13px;line-height:16px;color:#0c0c78;transform:scaleY(1.06);transform-origin:0 12px;"><span style="letter-spacing:0.059px">T</span></div>
<div class="t" style="left:258px;top:628px;font-size:13px;line-height:16px;color:#0c0c78;transform:scaleY(1.06);transform-origin:0 12px;"><span style="letter-spacing:-0.388px">C</span></div>
<div class="t" style="left:330px;top:628px;font-size:13px;line-height:16px;color:#0c0c78;transform:scaleY(1.06);transform-origin:0 12px;"><span style="letter-spacing:0.059px">T</span></div>
<div class="t" style="left:402px;top:628px;font-size:13px;line-height:16px;color:#0c0c78;transform:scaleY(1.06);transform-origin:0 12px;"><span style="letter-spacing:-0.388px">C</span></div>
<div class="t" style="left:474px;top:628px;font-size:13px;line-height:16px;color:#0c0c78;transform:scaleY(1.06);transform-origin:0 12px;"><span style="letter-spacing:0.059px">T</span></div>
<div class="t" style="left:546px;top:628px;font-size:13px;line-height:16px;color:#0c0c78;transform:scaleY(1.06);transform-origin:0 12px;"><span style="letter-spacing:0.059px">T</span></div>
<div class="t" style="left:618px;top:628px;font-size:13px;line-height:16px;color:#0c0c78;transform:scaleY(1.06);transform-origin:0 12px;"><span style="letter-spacing:-0.388px">C</span></div>
<div class="t" style="left:690px;top:628px;font-size:13px;line-height:16px;color:#0c0c78;transform:scaleY(1.06);transform-origin:0 12px;"><span style="letter-spacing:-0.388px">C</span></div>
<div class="t" style="left:762px;top:628px;font-size:13px;line-height:16px;color:#0c0c78;transform:scaleY(1.06);transform-origin:0 12px;"><span style="letter-spacing:0.059px">T</span></div>
<div class="t" style="left:834px;top:628px;font-size:13px;line-height:16px;color:#0c0c78;transform:scaleY(1.06);transform-origin:0 12px;"><span style="letter-spacing:-0.388px">C</span></div>
<div class="t" style="left:907px;top:628px;font-size:13px;line-height:16px;color:#0c0c78;transform:scaleY(1.06);transform-origin:0 12px;"><span style="letter-spacing:0.059px">T</span></div>
<div class="t" style="left:105px;top:643px;font-size:13px;line-height:16px;color:#0a640a;transform:scaleY(1.06);transform-origin:0 12px;"><span style="letter-spacing:-0.388px">C</span><span style="letter-spacing:-0.23px">h</span><span style="letter-spacing:0.112px">i</span><span style="letter-spacing:0.5px">ck</span><span style="letter-spacing:-0.23px">en</span></div>
<div class="t" style="left:186px;top:644px;font-size:13px;line-height:16px;color:#7474ae;transform:scaleY(1.0);transform-origin:0 12px;"><span style="letter-spacing:0.408px">=</span></div>
<div class="t" style="left:258px;top:644px;font-size:13px;line-height:16px;color:#7474ae;transform:scaleY(1.0);transform-origin:0 12px;"><span style="letter-spacing:0.408px">=</span></div>
<div class="t" style="left:330px;top:644px;font-size:13px;line-height:16px;color:#7474ae;transform:scaleY(1.0);transform-origin:0 12px;"><span style="letter-spacing:0.408px">=</span></div>
<div class="t" style="left:402px;top:644px;font-size:13px;line-height:16px;color:#7474ae;transform:scaleY(1.0);transform-origin:0 12px;"><span style="letter-spacing:0.408px">=</span></div>
<div class="t" style="left:474px;top:644px;font-size:13px;line-height:16px;color:#7474ae;transform:scaleY(1.0);transform-origin:0 12px;"><span style="letter-spacing:0.408px">=</span></div>
<div class="t" style="left:546px;top:644px;font-size:13px;line-height:16px;color:#7474ae;transform:scaleY(1.0);transform-origin:0 12px;"><span style="letter-spacing:0.408px">=</span></div>
<div class="t" style="left:618px;top:644px;font-size:13px;line-height:16px;color:#7474ae;transform:scaleY(1.0);transform-origin:0 12px;"><span style="letter-spacing:0.408px">=</span></div>
<div class="t" style="left:690px;top:644px;font-size:13px;line-height:16px;color:#7474ae;transform:scaleY(1.0);transform-origin:0 12px;"><span style="letter-spacing:0.408px">=</span></div>
<div class="t" style="left:762px;top:644px;font-size:13px;line-height:16px;color:#7474ae;transform:scaleY(1.0);transform-origin:0 12px;"><span style="letter-spacing:0.408px">=</span></div>
<div class="t" style="left:834px;top:644px;font-size:13px;line-height:16px;color:#7474ae;transform:scaleY(1.0);transform-origin:0 12px;"><span style="letter-spacing:0.408px">=</span></div>
<div class="t" style="left:907px;top:644px;font-size:13px;line-height:16px;color:#7474ae;transform:scaleY(1.0);transform-origin:0 12px;"><span style="letter-spacing:0.408px">=</span></div>
<div class="t" style="left:84px;top:658px;font-size:13px;line-height:16px;color:#0c0c78;transform:scaleY(1.06);transform-origin:0 12px;"><span style="letter-spacing:0.329px">X</span><span style="letter-spacing:-0.23px">_</span><span style="letter-spacing:0.388px">t</span><span style="letter-spacing:-0.329px">r</span><span style="letter-spacing:-0.23px">op</span><span style="letter-spacing:0.112px">i</span><span style="letter-spacing:0.5px">c</span><span style="letter-spacing:-0.23px">a</span><span style="letter-spacing:0.112px">li</span><span style="letter-spacing:0.5px">s</span></div>
<div class="t" style="left:186px;top:659px;font-size:13px;line-height:16px;color:#7474ae;transform:scaleY(1.0);transform-origin:0 12px;"><span style="letter-spacing:0.408px">=</span></div>
<div class="t" style="left:258px;top:659px;font-size:13px;line-height:16px;color:#7474ae;transform:scaleY(1.0);transform-origin:0 12px;"><span style="letter-spacing:0.408px">=</span></div>
<div class="t" style="left:330px;top:659px;font-size:13px;line-height:16px;color:#7474ae;transform:scaleY(1.0);transform-origin:0 12px;"><span style="letter-spacing:0.408px">=</span></div>
<div class="t" style="left:402px;top:659px;font-size:13px;line-height:16px;color:#7474ae;transform:scaleY(1.0);transform-origin:0 12px;"><span style="letter-spacing:0.408px">=</span></div>
<div class="t" style="left:474px;top:659px;font-size:13px;line-height:16px;color:#7474ae;transform:scaleY(1.0);transform-origin:0 12px;"><span style="letter-spacing:0.408px">=</span></div>
<div class="t" style="left:546px;top:659px;font-size:13px;line-height:16px;color:#7474ae;transform:scaleY(1.0);transform-origin:0 12px;"><span style="letter-spacing:0.408px">=</span></div>
<div class="t" style="left:618px;top:659px;font-size:13px;line-height:16px;color:#7474ae;transform:scaleY(1.0);transform-origin:0 12px;"><span style="letter-spacing:0.408px">=</span></div>
<div class="t" style="left:690px;top:659px;font-size:13px;line-height:16px;color:#7474ae;transform:scaleY(1.0);transform-origin:0 12px;"><span style="letter-spacing:0.408px">=</span></div>
<div class="t" style="left:762px;top:659px;font-size:13px;line-height:16px;color:#7474ae;transform:scaleY(1.0);transform-origin:0 12px;"><span style="letter-spacing:0.408px">=</span></div>
<div class="t" style="left:834px;top:659px;font-size:13px;line-height:16px;color:#7474ae;transform:scaleY(1.0);transform-origin:0 12px;"><span style="letter-spacing:0.408px">=</span></div>
<div class="t" style="left:907px;top:659px;font-size:13px;line-height:16px;color:#7474ae;transform:scaleY(1.0);transform-origin:0 12px;"><span style="letter-spacing:0.408px">=</span></div>
<div class="t" style="left:98px;top:673px;font-size:13px;line-height:16px;color:#0a640a;transform:scaleY(1.06);transform-origin:0 12px;"><span style="letter-spacing:0.059px">Z</span><span style="letter-spacing:-0.23px">eb</span><span style="letter-spacing:-0.329px">r</span><span style="letter-spacing:-0.23px">a</span><span style="letter-spacing:0.388px">f</span><span style="letter-spacing:0.112px">i</span><span style="letter-spacing:0.5px">s</span><span style="letter-spacing:-0.23px">h</span></div>
<div class="t" style="left:186px;top:674px;font-size:13px;line-height:16px;color:#7474ae;transform:scaleY(1.0);transform-origin:0 12px;"><span style="letter-spacing:0.408px">=</span></div>
<div class="t" style="left:258px;top:674px;font-size:13px;line-height:16px;color:#7474ae;transform:scaleY(1.0);transform-origin:0 12px;"><span style="letter-spacing:0.408px">=</span></div>
<div class="t" style="left:330px;top:674px;font-size:13px;line-height:16px;color:#7474ae;transform:scaleY(1.0);transform-origin:0 12px;"><span style="letter-spacing:0.408px">=</span></div>
<div class="t" style="left:402px;top:674px;font-size:13px;line-height:16px;color:#7474ae;transform:scaleY(1.0);transform-origin:0 12px;"><span style="letter-spacing:0.408px">=</span></div>
<div class="t" style="left:474px;top:674px;font-size:13px;line-height:16px;color:#7474ae;transform:scaleY(1.0);transform-origin:0 12px;"><span style="letter-spacing:0.408px">=</span></div>
<div class="t" style="left:546px;top:674px;font-size:13px;line-height:16px;color:#7474ae;transform:scaleY(1.0);transform-origin:0 12px;"><span style="letter-spacing:0.408px">=</span></div>
<div class="t" style="left:618px;top:674px;font-size:13px;line-height:16px;color:#7474ae;transform:scaleY(1.0);transform-origin:0 12px;"><span style="letter-spacing:0.408px">=</span></div>
<div class="t" style="left:690px;top:674px;font-size:13px;line-height:16px;color:#7474ae;transform:scaleY(1.0);transform-origin:0 12px;"><span style="letter-spacing:0.408px">=</span></div>
<div class="t" style="left:762px;top:674px;font-size:13px;line-height:16px;color:#7474ae;transform:scaleY(1.0);transform-origin:0 12px;"><span style="letter-spacing:0.408px">=</span></div>
<div class="t" style="left:834px;top:674px;font-size:13px;line-height:16px;color:#7474ae;transform:scaleY(1.0);transform-origin:0 12px;"><span style="letter-spacing:0.408px">=</span></div>
<div class="t" style="left:907px;top:674px;font-size:13px;line-height:16px;color:#7474ae;transform:scaleY(1.0);transform-origin:0 12px;"><span style="letter-spacing:0.408px">=</span></div>
<div class="t" style="left:441px;top:689px;font-size:13px;line-height:16px;color:#000;transform:scaleY(1.06);transform-origin:0 12px;"><span style="letter-spacing:-0.388px">R</span><span style="letter-spacing:-0.23px">epea</span><span style="letter-spacing:0.388px">t</span><span style="letter-spacing:0.112px">i</span><span style="letter-spacing:-0.23px">ng</span><span style="letter-spacing:0.388px"> </span><span style="letter-spacing:0.329px">E</span><span style="letter-spacing:0.112px">l</span><span style="letter-spacing:-0.23px">e</span><span style="letter-spacing:0.171px">m</span><span style="letter-spacing:-0.23px">en</span><span style="letter-spacing:0.388px">t</span><span style="letter-spacing:0.5px">s</span><span style="letter-spacing:0.388px"> </span><span style="letter-spacing:-0.23px">b</span><span style="letter-spacing:0.5px">y</span><span style="letter-spacing:0.388px"> </span><span style="letter-spacing:-0.388px">R</span><span style="letter-spacing:-0.23px">epea</span><span style="letter-spacing:0.388px">t</span><span style="letter-spacing:0.171px">M</span><span style="letter-spacing:-0.23px">a</span><span style="letter-spacing:0.5px">sk</span><span style="letter-spacing:-0.23px">e</span><span style="letter-spacing:-0.329px">r</span></div>
<div class="t" style="left:68px;top:703px;font-size:13px;line-height:16px;color:#000;transform:scaleY(1.06);transform-origin:0 12px;"><span style="letter-spacing:-0.388px">R</span><span style="letter-spacing:-0.23px">epea</span><span style="letter-spacing:0.388px">t</span><span style="letter-spacing:0.171px">M</span><span style="letter-spacing:-0.23px">a</span><span style="letter-spacing:0.5px">sk</span><span style="letter-spacing:-0.23px">e</span><span style="letter-spacing:-0.329px">r</span></div>
</div>
<svg width="950" height="734" viewBox="0 0 950 734" shape-rendering="crispEdges">
<rect x="372" y="24" width="361" height="1" fill="#000"/>
<rect x="372" y="17" width="1" height="16" fill="#000"/>
<rect x="732" y="17" width="1" height="16" fill="#000"/>
<rect x="516" y="35" width="1" height="14" fill="#000"/>
<rect x="876" y="35" width="1" height="14" fill="#000"/>
<defs>
<pattern id="arN" x="157" y="0" width="8" height="7" patternUnits="userSpaceOnUse">
<rect x="0" y="2" width="1" height="3" fill="#0c0c78"/><rect x="1" y="1" width="1" height="1" fill="#0c0c78"/><rect x="1" y="5" width="1" height="1" fill="#0c0c78"/>
<rect x="2" y="0" width="1" height="1" fill="#0c0c78" fill-opacity=".45"/><rect x="2" y="6" width="1" height="1" fill="#0c0c78" fill-opacity=".45"/>
</pattern>
<pattern id="arT" x="157" y="0" width="8" height="7" patternUnits="userSpaceOnUse">
<rect x="0" y="2" width="1" height="3" fill="#0a69af"/><rect x="1" y="1" width="1" height="1" fill="#0a69af"/><rect x="1" y="5" width="1" height="1" fill="#0a69af"/>
<rect x="2" y="0" width="1" height="1" fill="#0a69af" fill-opacity=".45"/><rect x="2" y="6" width="1" height="1" fill="#0a69af" fill-opacity=".45"/>
</pattern>
</defs>
<rect x="157" y="87" width="792" height="1" fill="#0c0c78"/>
<rect x="156" y="87" width="1" height="1" fill="#0c0c78" fill-opacity=".7"/>
<g transform="translate(0,84)"><rect x="157" y="0" width="792" height="7" fill="url(#arN)"/></g>
<rect x="157" y="103" width="792" height="1" fill="#0c0c78"/>
<rect x="156" y="103" width="1" height="1" fill="#0c0c78" fill-opacity=".7"/>
<g transform="translate(0,100)"><rect x="157" y="0" width="792" height="7" fill="url(#arN)"/></g>
<rect x="157" y="119" width="792" height="1" fill="#0c0c78"/>
<rect x="156" y="119" width="1" height="1" fill="#0c0c78" fill-opacity=".7"/>
<g transform="translate(0,116)"><rect x="157" y="0" width="792" height="7" fill="url(#arN)"/></g>
<rect x="157" y="135" width="792" height="1" fill="#0c0c78"/>
<rect x="156" y="135" width="1" height="1" fill="#0c0c78" fill-opacity=".7"/>
<g transform="translate(0,132)"><rect x="157" y="0" width="792" height="7" fill="url(#arN)"/></g>
<rect x="157" y="151" width="792" height="1" fill="#0c0c78"/>
<rect x="156" y="151" width="1" height="1" fill="#0c0c78" fill-opacity=".7"/>
<g transform="translate(0,148)"><rect x="157" y="0" width="792" height="7" fill="url(#arN)"/></g>
<rect x="157" y="167" width="792" height="1" fill="#0c0c78"/>
<rect x="156" y="167" width="1" height="1" fill="#0c0c78" fill-opacity=".7"/>
<g transform="translate(0,164)"><rect x="157" y="0" width="792" height="7" fill="url(#arN)"/></g>
<rect x="157" y="183" width="792" height="1" fill="#0c0c78"/>
<rect x="156" y="183" width="1" height="1" fill="#0c0c78" fill-opacity=".7"/>
<g transform="translate(0,180)"><rect x="157" y="0" width="792" height="7" fill="url(#arN)"/></g>
<rect x="157" y="199" width="792" height="1" fill="#0c0c78"/>
<rect x="156" y="199" width="1" height="1" fill="#0c0c78" fill-opacity=".7"/>
<g transform="translate(0,196)"><rect x="157" y="0" width="792" height="7" fill="url(#arN)"/></g>
<rect x="157" y="215" width="792" height="1" fill="#0a69af"/>
<rect x="156" y="215" width="1" height="1" fill="#0a69af" fill-opacity=".7"/>
<g transform="translate(0,212)"><rect x="157" y="0" width="792" height="7" fill="url(#arT)"/></g>
<rect x="156" y="246" width="793" height="1" fill="#0c0c78"/>
<rect x="156" y="317" width="793" height="15" fill="#bebebe"/>
<rect x="156" y="380" width="378" height="42" fill="#ececec"/>
<rect x="157" y="381" width="376" height="40" fill="#fff"/>
<rect x="156" y="398" width="5" height="23" fill="#FFA54F"/>
<rect x="163" y="401" width="5" height="20" fill="#EE9A00"/>
<rect x="170" y="392" width="5" height="29" fill="#8FBC8F"/>
<rect x="177" y="388" width="5" height="33" fill="#8B1C62"/>
<rect x="184" y="393" width="5" height="28" fill="#EE6A50"/>
<rect x="191" y="389" width="5" height="32" fill="#FF0000"/>
<rect x="198" y="387" width="5" height="34" fill="#CDB79E"/>
<rect x="205" y="402" width="5" height="19" fill="#EEEE00"/>
<rect x="212" y="399" width="5" height="22" fill="#EEEE00"/>
<rect x="219" y="398" width="5" height="23" fill="#EEEE00"/>
<rect x="226" y="382" width="5" height="39" fill="#EEEE00"/>
<rect x="233" y="384" width="5" height="37" fill="#EEEE00"/>
<rect x="240" y="397" width="5" height="24" fill="#EEEE00"/>
<rect x="247" y="396" width="5" height="25" fill="#EEEE00"/>
<rect x="254" y="403" width="5" height="18" fill="#EEEE00"/>
<rect x="261" y="400" width="5" height="21" fill="#EEEE00"/>
<rect x="268" y="394" width="5" height="27" fill="#EEEE00"/>
<rect x="275" y="401" width="5" height="20" fill="#EEEE00"/>
<rect x="282" y="400" width="5" height="21" fill="#EEEE00"/>
<rect x="289" y="402" width="5" height="19" fill="#EEEE00"/>
<rect x="296" y="395" width="5" height="26" fill="#00CDCD"/>
<rect x="303" y="385" width="5" height="36" fill="#EE82EE"/>
<rect x="310" y="393" width="5" height="28" fill="#9AC0CD"/>
<rect x="317" y="386" width="5" height="35" fill="#EED5D2"/>
<rect x="324" y="386" width="5" height="35" fill="#EED5D2"/>
<rect x="331" y="389" width="5" height="32" fill="#CDB79E"/>
<rect x="338" y="393" width="5" height="28" fill="#EEC591"/>
<rect x="345" y="392" width="5" height="29" fill="#8B7355"/>
<rect x="352" y="404" width="5" height="17" fill="#8B7355"/>
<rect x="359" y="392" width="5" height="29" fill="#CDAA7D"/>
<rect x="366" y="388" width="5" height="33" fill="#EED5D2"/>
<rect x="373" y="402" width="5" height="19" fill="#B452CD"/>
<rect x="380" y="404" width="5" height="17" fill="#7A378B"/>
<rect x="387" y="401" width="5" height="20" fill="#CDB79E"/>
<rect x="394" y="397" width="5" height="24" fill="#CDB79E"/>
<rect x="401" y="418" width="5" height="3" fill="#CDB79E"/>
<rect x="408" y="398" width="5" height="23" fill="#9ACD32"/>
<rect x="415" y="390" width="5" height="31" fill="#CDB79E"/>
<rect x="422" y="397" width="5" height="24" fill="#7A67EE"/>
<rect x="429" y="404" width="5" height="17" fill="#FFD700"/>
<rect x="436" y="386" width="5" height="35" fill="#FFB6C1"/>
<rect x="443" y="408" width="5" height="13" fill="#CD9B1D"/>
<rect x="450" y="385" width="5" height="36" fill="#B4EEB4"/>
<rect x="457" y="380" width="5" height="41" fill="#D9D9D9"/>
<rect x="464" y="400" width="5" height="21" fill="#3A5FCD"/>
<rect x="471" y="400" width="5" height="21" fill="#1E90FF"/>
<rect x="478" y="392" width="5" height="29" fill="#CDB79E"/>
<rect x="485" y="396" width="5" height="25" fill="#CDB79E"/>
<rect x="492" y="400" width="5" height="21" fill="#FFD39B"/>
<rect x="499" y="395" width="5" height="26" fill="#A6A6A6"/>
<rect x="506" y="385" width="5" height="36" fill="#008B45"/>
<rect x="513" y="384" width="5" height="37" fill="#EED5D2"/>
<rect x="520" y="394" width="5" height="27" fill="#EED5D2"/>
<rect x="527" y="418" width="5" height="3" fill="#FF00FF"/>
<rect x="156" y="422" width="793" height="2" fill="#000080"/>
<rect x="156" y="468" width="793" height="1" fill="#d03078"/>
<rect x="156" y="469" width="793" height="1" fill="#e03848"/>
<rect x="156" y="470" width="793" height="1" fill="#2a0a2a"/>
<rect x="168" y="511" width="38" height="1" fill="#ebfbeb"/>
<rect x="184" y="511" width="6" height="1" fill="#00ff00"/>
<rect x="313" y="510" width="38" height="1" fill="#dcfadc"/>
<rect x="329" y="510" width="6" height="2" fill="#00ff00"/>
<rect x="889" y="513" width="38" height="1" fill="#c8f8c8"/>
<rect x="905" y="513" width="6" height="3" fill="#00ff00"/>
<rect x="249" y="513" width="34" height="1" fill="#a2a200" fill-opacity=".33"/>
<rect x="249" y="515" width="34" height="1" fill="#a2a200" fill-opacity=".33"/>
<rect x="276" y="513" width="7" height="1" fill="#a2a200" fill-opacity=".5"/>
<rect x="276" y="515" width="7" height="1" fill="#a2a200" fill-opacity=".5"/>
<polygon points="242.6,514.5 246,513.7 250.5,513.3 250.5,515.7 246,515.3" fill="#a2a200" shape-rendering="auto"/>
<rect x="660" y="612" width="1" height="14" fill="#e68a17"/>
<rect x="660" y="627" width="1" height="14" fill="#e68a17"/>
<rect x="156" y="703" width="793" height="15" fill="#000"/>
</svg>
</body></html>
